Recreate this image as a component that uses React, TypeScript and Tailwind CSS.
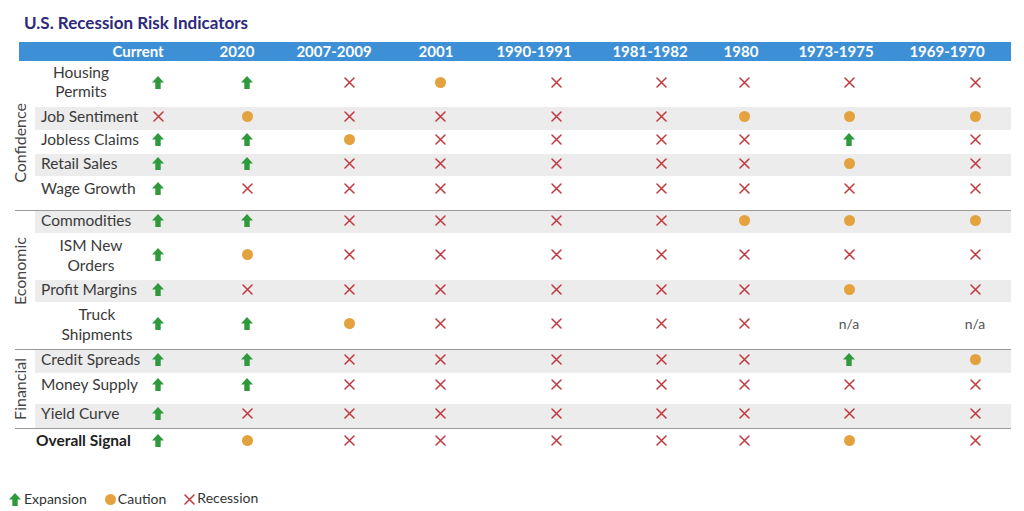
import React from 'react';

type Sig = 'U' | 'C' | 'X' | 'N';

interface Row {
  label: React.ReactNode;
  labelClass: string;
  h: string;
  gray?: boolean;
  vals: Sig[];
}

interface Section {
  name?: string;
  nameClass?: string;
  rows: Row[];
}

const headers = ['Current', '2020', '2007-2009', '2001', '1990-1991', '1981-1982', '1980', '1973-1975', '1969-1970'];

const single = 'pl-[6px]';

const sections: Section[] = [
  {
    name: 'Confidence',
    nameClass: 'pt-[14px]',
    rows: [
      { label: <>Housing<br />Permits</>, labelClass: 'w-[92px] text-center leading-[19px]', h: 'h-[46px]', vals: ['U', 'U', 'X', 'C', 'X', 'X', 'X', 'X', 'X'] },
      { label: 'Job Sentiment', labelClass: single, h: 'h-[23px]', gray: true, vals: ['X', 'C', 'X', 'X', 'X', 'X', 'C', 'C', 'C'] },
      { label: 'Jobless Claims', labelClass: single, h: 'h-[24px]', vals: ['U', 'U', 'C', 'X', 'X', 'X', 'X', 'U', 'X'] },
      { label: 'Retail Sales', labelClass: single, h: 'h-[22px]', gray: true, vals: ['U', 'U', 'X', 'X', 'X', 'X', 'X', 'C', 'X'] },
      { label: 'Wage Growth', labelClass: single, h: 'h-[34px]', vals: ['U', 'X', 'X', 'X', 'X', 'X', 'X', 'X', 'X'] },
    ],
  },
  {
    name: 'Economic',
    nameClass: 'pb-[18px]',
    rows: [
      { label: 'Commodities', labelClass: single, h: 'h-[22px]', gray: true, vals: ['U', 'U', 'X', 'X', 'X', 'X', 'C', 'C', 'C'] },
      { label: <>ISM New<br />Orders</>, labelClass: 'w-[112px] text-center leading-[20px]', h: 'h-[47px]', vals: ['U', 'C', 'X', 'X', 'X', 'X', 'X', 'X', 'X'] },
      { label: 'Profit Margins', labelClass: single, h: 'h-[22px]', gray: true, vals: ['U', 'X', 'X', 'X', 'X', 'X', 'X', 'C', 'X'] },
      { label: <>Truck<br />Shipments</>, labelClass: 'w-[124px] text-center leading-[20px]', h: 'h-[47px]', vals: ['U', 'U', 'C', 'X', 'X', 'X', 'X', 'N', 'N'] },
    ],
  },
  {
    name: 'Financial',
    nameClass: '',
    rows: [
      { label: 'Credit Spreads', labelClass: single, h: 'h-[23px]', gray: true, vals: ['U', 'U', 'X', 'X', 'X', 'X', 'X', 'U', 'C'] },
      { label: 'Money Supply', labelClass: single, h: 'h-[31px]', vals: ['U', 'U', 'X', 'X', 'X', 'X', 'X', 'X', 'X'] },
      { label: 'Yield Curve', labelClass: single, h: 'h-[24px]', gray: true, vals: ['U', 'X', 'X', 'X', 'X', 'X', 'X', 'X', 'X'] },
    ],
  },
  {
    rows: [
      { label: 'Overall Signal', labelClass: 'pl-[1px] font-bold text-[#222]', h: 'h-[32px]', vals: ['U', 'C', 'X', 'X', 'X', 'X', 'X', 'C', 'X'] },
    ],
  },
];

function UpArrow() {
  return (
    <svg width="12" height="13" viewBox="0 0 12 13">
      <path d="M6 0L12 6.4H8.7V13H3.3V6.4H0Z" fill="#2f9a3c" />
    </svg>
  );
}

function Dot() {
  return <div className="w-[11px] h-[11px] rounded-full bg-[#e3a23d]" />;
}

function Cross() {
  return (
    <svg width="11" height="11" viewBox="0 0 11 11">
      <path d="M1 1L10 10M10 1L1 10" stroke="#c2373d" strokeWidth="1.5" strokeLinecap="round" />
    </svg>
  );
}

function Signal({ s }: { s: Sig }) {
  if (s === 'U') return <UpArrow />;
  if (s === 'C') return <Dot />;
  if (s === 'X') return <Cross />;
  return <span className="text-[14px] text-[#555] whitespace-nowrap">n/a</span>;
}

export default function App() {
  return (
    <div className="w-[1024px] h-[511px] bg-white overflow-hidden font-['Lato',_'Liberation_Sans',_sans-serif] text-[#3a3a3a]">
      <div className="pt-[13px] pl-[24px] h-[42px]">
        <h1 className="text-[17px] leading-[20px] font-bold text-[#2d2a7c]">U.S. Recession Risk Indicators</h1>
      </div>

      {/* Header bar */}
      <div className="ml-[19px] w-[992px] h-[19px] bg-[#3d8fd6] grid grid-cols-[79px_99px_97px_102px_98px_116px_91px_95px_111px_1fr] items-center text-white font-bold text-[15px] leading-none">
        <div />
        {headers.map(h => (
          <div key={h}>
            <div className="w-20 text-center">{h}</div>
          </div>
        ))}
      </div>

      {/* Table body */}
      <div className="ml-[15px] w-[996px]">
        {sections.map((sec, si) => (
          <div key={si} className={`flex ${si > 0 ? 'border-t border-[#9a9a9a]' : ''}`}>
            <div className={`w-[20px] flex flex-col justify-center ${sec.nameClass ?? ''}`}>
              {sec.name && (
                <div className="[writing-mode:vertical-rl] rotate-180 text-[16px] leading-[14px] text-[#444] -ml-[2px]">
                  {sec.name}
                </div>
              )}
            </div>
            <div className="flex-1">
              {sec.rows.map((r, ri) => (
                <div
                  key={ri}
                  className={`grid grid-cols-[111px_89px_102px_91px_116px_105px_83px_105px_126px_1fr] items-center ${r.h} ${r.gray ? 'bg-[#ececec]' : ''}`}
                >
                  <div className="text-[15.5px] leading-none whitespace-nowrap">
                    <div className={r.labelClass}>{r.label}</div>
                  </div>
                  {r.vals.map((v, vi) => (
                    <div key={vi}>
                      <div className="w-6 flex justify-center items-center">
                        <Signal s={v} />
                      </div>
                    </div>
                  ))}
                  <div />
                </div>
              ))}
            </div>
          </div>
        ))}
      </div>

      {/* Legend */}
      <div className="mt-[31px] ml-[9px] flex items-center text-[14px] leading-none text-[#333]">
        <UpArrow />
        <span className="ml-[3px]">Expansion</span>
        <div className="ml-[18px]"><Dot /></div>
        <span className="ml-[2px]">Caution</span>
        <div className="ml-[18px]"><Cross /></div>
        <span className="ml-[2px] -mt-[2px]">Recession</span>
      </div>
    </div>
  );
}
